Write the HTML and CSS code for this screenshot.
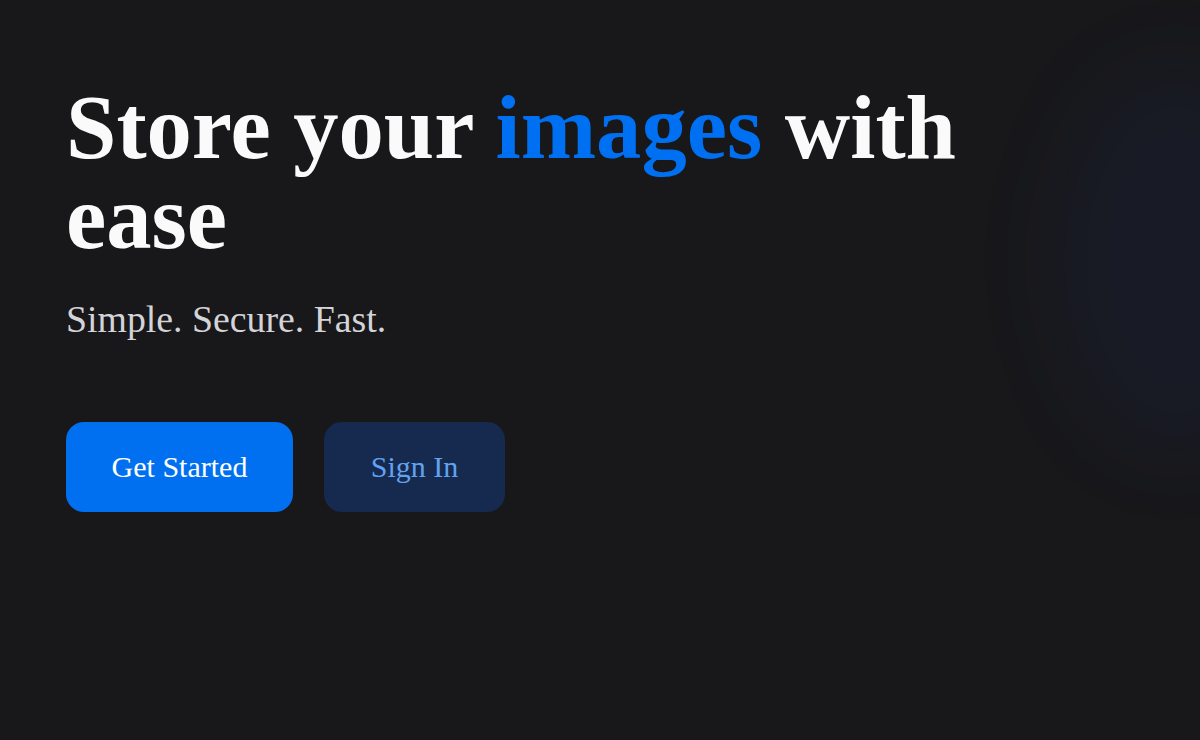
FILE: index.html
```html
<!DOCTYPE html>
<html lang="en">
<head>
<meta charset="utf-8">
<title>Store your images with ease</title>
<link rel="stylesheet" href="styles.css">
</head>
<body>
<main class="hero">
  <div class="glow"></div>
  <div class="content">
    <h1 class="title">Store your <span class="accent">images</span> with ease</h1>
    <p class="subtitle">Simple. Secure. Fast.</p>
    <div class="actions">
      <a class="btn btn-primary" href="#">Get Started</a>
      <a class="btn btn-secondary" href="#">Sign In</a>
    </div>
  </div>
</main>
</body>
</html>
```

FILE: styles.css
```css
* { box-sizing: border-box; }
html, body {
  margin: 0;
  padding: 0;
  height: 100%;
  background: #18181b;
  overflow: hidden;
}
body {
  font-family: "Liberation Serif", "Times New Roman", serif;
  color: #fafafa;
}
.hero {
  position: relative;
  min-height: 740px;
  overflow: hidden;
}
.glow {
  position: absolute;
  right: -90px;
  top: 70px;
  width: 230px;
  height: 380px;
  border-radius: 50%;
  background: rgba(30, 60, 140, 0.10);
  filter: blur(40px);
  pointer-events: none;
}
.content {
  position: relative;
  padding: 83px 0 0 66px;
  max-width: 990px;
}
.title {
  margin: 0;
  font-size: 90.6px;
  line-height: 90px;
  font-weight: 700;
  color: #fafafa;
}
.accent { color: #0070f3; }
.subtitle {
  margin: 35px 0 0;
  font-size: 37.8px;
  line-height: 42px;
  color: #d4d4d8;
}
.actions {
  display: flex;
  gap: 31px;
  margin-top: 82px;
}
.btn {
  display: inline-flex;
  align-items: center;
  justify-content: center;
  height: 90px;
  padding: 0 45px;
  border-radius: 18px;
  font-size: 30px;
  text-decoration: none;
}
.btn-primary {
  background: #0070f0;
  color: #ffffff;
  width: 227px;
}
.btn-secondary {
  background: #152a4e;
  color: #62a2f0;
  width: 181px;
}
```
